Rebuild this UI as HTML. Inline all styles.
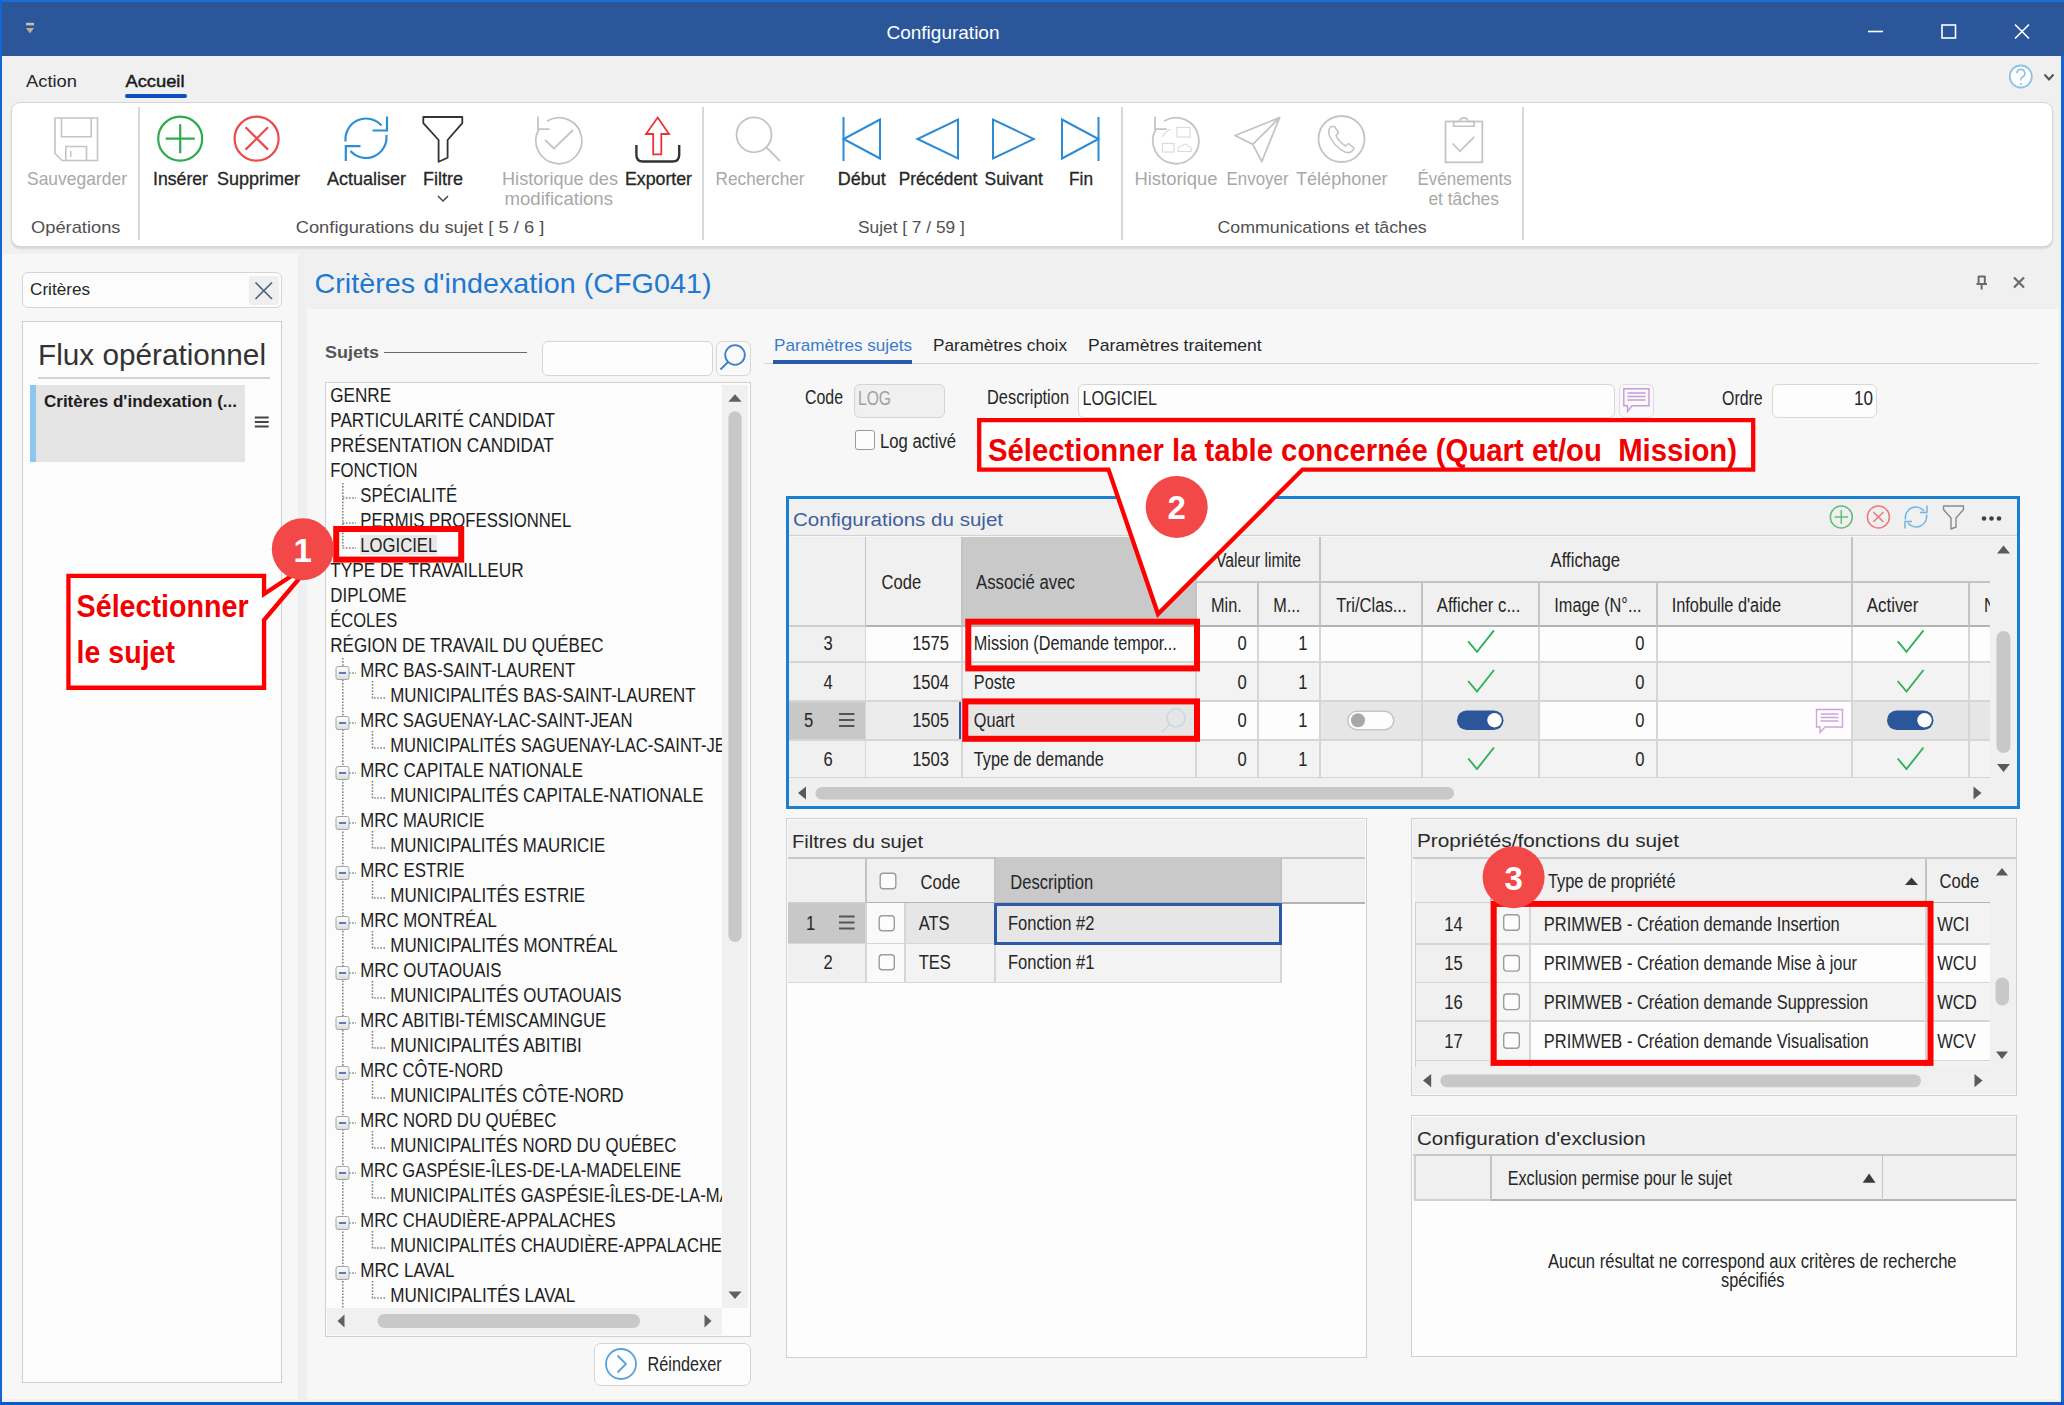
<!DOCTYPE html>
<html><head><meta charset="utf-8"><title>Configuration</title>
<style>
html,body{margin:0;padding:0;}
body{width:2064px;height:1405px;overflow:hidden;position:relative;background:#f0f0f0;font-family:"Liberation Sans",sans-serif;}
.a{position:absolute;box-sizing:border-box;}
.t{position:absolute;white-space:nowrap;transform-origin:0 0;}
svg.a{overflow:visible;}
svg.s{position:absolute;left:0;top:0;overflow:visible;font-family:"Liberation Sans",sans-serif;}
svg.s text{white-space:pre;}
</style></head><body>
<div class="a" style="left:0.00px;top:0.00px;width:2064px;height:1405px;background:#f0f0f0;"></div>
<div class="a" style="left:0.00px;top:0.00px;width:2064px;height:56px;background:#2b579a;"></div>
<div class="a" style="left:0.00px;top:0.00px;width:2064px;height:2px;background:#1a6ed6;"></div>
<svg class="a" style="left:20px;top:18px;" width="20" height="20" viewBox="20 18 20 20"><rect x="26" y="22.8" width="8" height="2.6" fill="#c9bda6"/><path d="M26,28 L34,28 L30,33.5 Z" fill="#bcae96"/></svg>
<svg class="s" width="1" height="1"><text x="886.50" y="38.86" font-size="17.99" fill="#ffffff" textLength="113.00" lengthAdjust="spacingAndGlyphs">Configuration</text></svg>
<svg class="a" style="left:1860px;top:20px;" width="180" height="25" viewBox="1860 20 180 25"><line x1="1868" y1="31.5" x2="1883" y2="31.5" stroke="#fff" stroke-width="1.6"/><rect x="1942" y="25" width="13.5" height="13" fill="none" stroke="#fff" stroke-width="1.6"/><path d="M2015,24.5 L2029,38.5 M2029,24.5 L2015,38.5" stroke="#fff" stroke-width="1.6"/></svg>
<svg class="s" width="1" height="1"><text x="26.00" y="86.66" font-size="17" fill="#262626" textLength="51.00" lengthAdjust="spacingAndGlyphs">Action</text></svg>
<svg class="s" width="1" height="1"><text x="125.50" y="86.66" font-size="17" fill="#1a1a1a" textLength="59.00" lengthAdjust="spacingAndGlyphs" stroke="#1a1a1a" stroke-width="0.45">Accueil</text></svg>
<div class="a" style="left:125.00px;top:94.00px;width:62px;height:3.5px;background:#0a4fc4;border-radius:2px;"></div>
<svg class="a" style="left:2005px;top:60px;" width="55" height="35" viewBox="2005 60 55 35"><circle cx="2020.8" cy="76.5" r="11" fill="#fff" stroke="#8cc4e8" stroke-width="1.8"/><path d="M2016.8,73.2 A4,4 0 1 1 2022.5,77 Q2020.8,78 2020.8,80.5" fill="none" stroke="#8cc4e8" stroke-width="1.6"/><circle cx="2020.8" cy="84" r="1.1" fill="#8cc4e8"/><path d="M2044.5,74.5 L2049,79.5 L2053.5,74.5" fill="none" stroke="#555" stroke-width="2.1"/></svg>
<div class="a" style="left:11.00px;top:102.00px;width:2042px;height:145px;background:#fff;border:1px solid #d4d4d4;border-radius:9px;box-shadow:0 2px 2px rgba(0,0,0,0.10);"></div>
<div class="a" style="left:138.00px;top:107.00px;width:1.5px;height:133px;background:#d8d8d8;"></div>
<div class="a" style="left:702.00px;top:107.00px;width:1.5px;height:133px;background:#d8d8d8;"></div>
<div class="a" style="left:1121.00px;top:107.00px;width:1.5px;height:133px;background:#d8d8d8;"></div>
<div class="a" style="left:1522.00px;top:107.00px;width:1.5px;height:133px;background:#d8d8d8;"></div>
<svg class="s" width="1" height="1"><text x="27.00" y="185.16" font-size="17.9" fill="#a8a8a8" textLength="100.00" lengthAdjust="spacingAndGlyphs">Sauvegarder</text></svg>
<svg class="s" width="1" height="1"><text x="153.00" y="185.16" font-size="17.9" fill="#262626" textLength="55.00" lengthAdjust="spacingAndGlyphs" stroke="#262626" stroke-width="0.3">Insérer</text></svg>
<svg class="s" width="1" height="1"><text x="217.00" y="185.16" font-size="17.9" fill="#262626" textLength="83.00" lengthAdjust="spacingAndGlyphs" stroke="#262626" stroke-width="0.3">Supprimer</text></svg>
<svg class="s" width="1" height="1"><text x="327.00" y="185.16" font-size="17.9" fill="#262626" textLength="79.00" lengthAdjust="spacingAndGlyphs" stroke="#262626" stroke-width="0.3">Actualiser</text></svg>
<svg class="s" width="1" height="1"><text x="423.00" y="185.16" font-size="17.9" fill="#262626" textLength="40.00" lengthAdjust="spacingAndGlyphs" stroke="#262626" stroke-width="0.3">Filtre</text></svg>
<svg class="s" width="1" height="1"><text x="502.00" y="185.16" font-size="17.9" fill="#a8a8a8" textLength="116.00" lengthAdjust="spacingAndGlyphs">Historique des</text></svg>
<svg class="s" width="1" height="1"><text x="504.50" y="204.66" font-size="17.9" fill="#a8a8a8" textLength="108.50" lengthAdjust="spacingAndGlyphs">modifications</text></svg>
<svg class="s" width="1" height="1"><text x="625.00" y="185.16" font-size="17.9" fill="#262626" textLength="67.00" lengthAdjust="spacingAndGlyphs" stroke="#262626" stroke-width="0.3">Exporter</text></svg>
<svg class="s" width="1" height="1"><text x="715.60" y="185.16" font-size="17.9" fill="#a8a8a8" textLength="89.00" lengthAdjust="spacingAndGlyphs">Rechercher</text></svg>
<svg class="s" width="1" height="1"><text x="837.70" y="185.16" font-size="17.9" fill="#262626" textLength="48.00" lengthAdjust="spacingAndGlyphs" stroke="#262626" stroke-width="0.3">Début</text></svg>
<svg class="s" width="1" height="1"><text x="898.70" y="185.16" font-size="17.9" fill="#262626" textLength="78.70" lengthAdjust="spacingAndGlyphs" stroke="#262626" stroke-width="0.3">Précédent</text></svg>
<svg class="s" width="1" height="1"><text x="984.50" y="185.16" font-size="17.9" fill="#262626" textLength="58.30" lengthAdjust="spacingAndGlyphs" stroke="#262626" stroke-width="0.3">Suivant</text></svg>
<svg class="s" width="1" height="1"><text x="1069.00" y="185.16" font-size="17.9" fill="#262626" textLength="24.00" lengthAdjust="spacingAndGlyphs" stroke="#262626" stroke-width="0.3">Fin</text></svg>
<svg class="s" width="1" height="1"><text x="1134.40" y="185.16" font-size="17.9" fill="#a8a8a8" textLength="83.00" lengthAdjust="spacingAndGlyphs">Historique</text></svg>
<svg class="s" width="1" height="1"><text x="1226.60" y="185.16" font-size="17.9" fill="#a8a8a8" textLength="62.00" lengthAdjust="spacingAndGlyphs">Envoyer</text></svg>
<svg class="s" width="1" height="1"><text x="1296.00" y="185.16" font-size="17.9" fill="#a8a8a8" textLength="91.50" lengthAdjust="spacingAndGlyphs">Téléphoner</text></svg>
<svg class="s" width="1" height="1"><text x="1417.60" y="185.16" font-size="17.9" fill="#a8a8a8" textLength="94.00" lengthAdjust="spacingAndGlyphs">Événements</text></svg>
<svg class="s" width="1" height="1"><text x="1428.40" y="204.66" font-size="17.9" fill="#a8a8a8" textLength="70.60" lengthAdjust="spacingAndGlyphs">et tâches</text></svg>
<svg class="s" width="1" height="1"><text x="31.00" y="233.16" font-size="17" fill="#505050" textLength="89.50" lengthAdjust="spacingAndGlyphs">Opérations</text></svg>
<svg class="s" width="1" height="1"><text x="295.70" y="233.16" font-size="17" fill="#505050" textLength="248.60" lengthAdjust="spacingAndGlyphs">Configurations du sujet [ 5 / 6 ]</text></svg>
<svg class="s" width="1" height="1"><text x="858.00" y="233.16" font-size="17" fill="#505050" textLength="106.80" lengthAdjust="spacingAndGlyphs">Sujet [ 7 / 59 ]</text></svg>
<svg class="s" width="1" height="1"><text x="1217.50" y="233.16" font-size="17" fill="#505050" textLength="209.20" lengthAdjust="spacingAndGlyphs">Communications et tâches</text></svg>
<svg class="a" style="left:0px;top:100px;" width="1600" height="110" viewBox="0 100 1600 110"><path d="M55,118 H97.5 V160.5 H62 L55,153.5 Z" fill="none" stroke="#c4c4c4" stroke-width="1.6"/><path d="M61.5,118 V136.8 H91.2 V118" fill="none" stroke="#c4c4c4" stroke-width="1.6"/><path d="M65.8,160.5 V146.5 H86.5 V160.5" fill="none" stroke="#c4c4c4" stroke-width="1.6"/><line x1="70.8" y1="151" x2="70.8" y2="157" stroke="#c4c4c4" stroke-width="1.4"/><circle cx="180.2" cy="138.7" r="22" fill="none" stroke="#2faa4f" stroke-width="2.2"/><path d="M165.7,138.7 H194.8 M180.2,124.2 V153.2" stroke="#2faa4f" stroke-width="2.2"/><circle cx="256.6" cy="138.7" r="22" fill="none" stroke="#e84c4c" stroke-width="2.2"/><path d="M245.6,127.2 L268,149.6 M268,127.2 L245.6,149.6" stroke="#e84c4c" stroke-width="2.2"/><path d="M345.6,141.5 A20.6,20.6 0 0 1 381.5,125.5" fill="none" stroke="#2b8fd8" stroke-width="2.2"/><path d="M387,116.5 V130.5 H372.5" fill="none" stroke="#2b8fd8" stroke-width="2.2"/><path d="M386.4,135 A20.6,20.6 0 0 1 350.5,151" fill="none" stroke="#2b8fd8" stroke-width="2.2"/><path d="M345.8,161 V146.2 H360.5" fill="none" stroke="#2b8fd8" stroke-width="2.2"/><path d="M423.3,117 H462.3 V123.2 L447.6,140 V157.8 L438.6,161.8 V140 L423.3,123.2 Z" fill="none" stroke="#333" stroke-width="1.8" stroke-linejoin="round"/><path d="M438,196 L443,201 L448,196" fill="none" stroke="#444" stroke-width="1.5"/><path d="M538.5,130 A23,23 0 1 0 547,121" fill="none" stroke="#c4c4c4" stroke-width="1.8"/><path d="M538,116.6 V129.2 H549.6" fill="none" stroke="#c4c4c4" stroke-width="1.8"/><path d="M545,140 L554,148.5 L573,130" fill="none" stroke="#c4c4c4" stroke-width="1.8"/><path d="M657.7,117.5 L669,134 H661.3 V154.3 H653.2 V134 H646 Z" fill="none" stroke="#e8343a" stroke-width="1.8" stroke-linejoin="miter"/><path d="M636.4,145 V155 Q636.4,161.5 643,161.5 H672.5 Q679.2,161.5 679.2,155 V145" fill="none" stroke="#333" stroke-width="2.4"/><circle cx="754" cy="134.8" r="17.5" fill="none" stroke="#c4c4c4" stroke-width="1.8"/><line x1="766.5" y1="147.5" x2="780" y2="161" stroke="#c4c4c4" stroke-width="1.8"/><path d="M843.5,117 V161 M880,119.5 V158.5 L843.5,139 Z" fill="none" stroke="#2a8ad4" stroke-width="2"/><path d="M958,119.5 V158.5 L917.5,139 Z" fill="none" stroke="#2a8ad4" stroke-width="2"/><path d="M993,119.5 V158.5 L1033.8,139 Z" fill="none" stroke="#2a8ad4" stroke-width="2"/><path d="M1098.5,117 V161 M1062,119.5 V158.5 L1098.5,139 Z" fill="none" stroke="#2a8ad4" stroke-width="2"/><path d="M1155.5,130 A23,23 0 1 0 1164,121" fill="none" stroke="#c4c4c4" stroke-width="1.8"/><path d="M1155,116.6 V129.2 H1166.8" fill="none" stroke="#c4c4c4" stroke-width="1.8"/><g fill="none" stroke="#dadada" stroke-width="1.2"><rect x="1177" y="127.5" width="13" height="9.5"/><rect x="1162.5" y="143.5" width="11.5" height="8.5"/><path d="M1178,151.5 Q1177,146 1182,146 Q1185,142 1188,146 Q1192,146 1191,151.5 Z"/><path d="M1162,137 Q1166,131 1171,129"/></g><path d="M1279.7,117.5 L1235,135.5 L1252.8,144.4 L1261.8,161.5 Z M1279.7,117.5 L1252.8,144.4" fill="none" stroke="#c4c4c4" stroke-width="1.8" stroke-linejoin="round"/><circle cx="1341.5" cy="139" r="23" fill="none" stroke="#c4c4c4" stroke-width="1.8"/><path d="M1331,126.5 Q1327,130 1330,137 Q1335,147 1345,152 Q1350,154 1353,150 L1354,148 L1348.5,143.5 L1345.5,146 Q1339,142 1336,135.5 L1338.5,132.5 L1334.5,126.5 Z" fill="none" stroke="#c4c4c4" stroke-width="1.6" stroke-linejoin="round"/><rect x="1445.5" y="121.5" width="36.8" height="40.8" fill="none" stroke="#c4c4c4" stroke-width="1.8"/><path d="M1453.6,121.5 V126.2 H1474.2 V121.5 H1468 A4.3,4.3 0 0 0 1459.5,121.5 Z" fill="none" stroke="#c4c4c4" stroke-width="1.6"/><path d="M1452.7,143.5 L1459.9,151.3 L1474.2,136.9" fill="none" stroke="#c4c4c4" stroke-width="1.8"/></svg>
<div class="a" style="left:0.00px;top:0.00px;width:2px;height:1405px;background:#1466d2;"></div>
<div class="a" style="left:2061.00px;top:56.00px;width:3px;height:1349px;background:#1466d2;"></div>
<div class="a" style="left:0.00px;top:1402.00px;width:2064px;height:3px;background:#0b57c4;"></div>
<div class="a" style="left:3.00px;top:254.00px;width:295px;height:1145px;background:#f7f7f7;"></div>
<div class="a" style="left:298.00px;top:254.00px;width:9px;height:1148px;background:#efefef;"></div>
<div class="a" style="left:22.00px;top:272.00px;width:260px;height:36px;background:#fcfcfc;border:1px solid #d6d6d6;border-radius:6px;"></div>
<div class="a" style="left:248.50px;top:276.00px;width:30px;height:29px;background:#efefef;border-radius:3px;"></div>
<svg class="a" style="left:250px;top:278px;" width="28" height="26" viewBox="250 278 28 26"><path d="M255.5,282.5 L272,299 M272,282.5 L255.5,299" stroke="#4e6182" stroke-width="1.7"/></svg>
<svg class="s" width="1" height="1"><text x="30.00" y="294.66" font-size="16" fill="#262626" textLength="60.00" lengthAdjust="spacingAndGlyphs">Critères</text></svg>
<div class="a" style="left:22.00px;top:321.00px;width:260px;height:1062px;background:#fcfcfc;border:1.5px solid #d0d0d0;"></div>
<svg class="s" width="1" height="1"><text x="38.00" y="365.16" font-size="29" fill="#333333" textLength="228.00" lengthAdjust="spacingAndGlyphs">Flux opérationnel</text></svg>
<div class="a" style="left:38.00px;top:377.00px;width:232px;height:1.5px;background:#d4d4d4;"></div>
<div class="a" style="left:30.00px;top:384.50px;width:215px;height:77.5px;background:#e4e4e4;"></div>
<div class="a" style="left:30.00px;top:384.50px;width:6px;height:77.5px;background:#8ec6ee;"></div>
<svg class="s" width="1" height="1"><text x="44.00" y="406.66" font-size="17" fill="#1e1e1e" font-weight="bold">Critères d&#x27;indexation (...</text></svg>
<svg class="a" style="left:250px;top:412px;" width="25" height="20" viewBox="250 412 25 20"><path d="M254.8,417.5 H268.7 M254.8,422 H268.7 M254.8,426.5 H268.7" stroke="#444" stroke-width="2"/></svg>
<div class="a" style="left:305.00px;top:254.00px;width:1756px;height:55px;background:#f0f0f0;"></div>
<div class="a" style="left:307.00px;top:309.00px;width:1752px;height:1090px;background:#f7f7f7;"></div>
<svg class="s" width="1" height="1"><text x="314.50" y="293.16" font-size="28" fill="#1f78d1" textLength="397.00" lengthAdjust="spacingAndGlyphs">Critères d&#x27;indexation (CFG041)</text></svg>
<svg class="a" style="left:1970px;top:270px;" width="60" height="25" viewBox="1970 270 60 25"><path d="M1978.4,276.5 H1985 M1978.6,276 V284 M1984.8,276 V284 M1976.5,284 H1987 M1981.6,284 V289.5" fill="none" stroke="#6a6a6a" stroke-width="2"/><path d="M2014,277.5 L2024,287.5 M2024,277.5 L2014,287.5" stroke="#6a6a6a" stroke-width="2.2"/></svg>
<svg class="s" width="1" height="1"><text x="325.00" y="358.16" font-size="17" fill="#555555" font-weight="bold" textLength="54.00" lengthAdjust="spacingAndGlyphs">Sujets</text></svg>
<div class="a" style="left:384.00px;top:351.50px;width:143px;height:1.6px;background:#6a6a6a;"></div>
<div class="a" style="left:542.00px;top:341.00px;width:171px;height:35px;background:#fdfdfd;border:1.5px solid #d6d6d6;border-radius:6px;"></div>
<div class="a" style="left:716.00px;top:341.00px;width:35px;height:35px;background:#f9f9f9;border:1.5px solid #d6d6d6;border-radius:6px;"></div>
<svg class="a" style="left:715px;top:340px;" width="36" height="36" viewBox="715 340 36 36"><circle cx="735" cy="355" r="9.8" fill="none" stroke="#3b7fc4" stroke-width="1.8"/><line x1="728" y1="362" x2="720.5" y2="369.5" stroke="#3b7fc4" stroke-width="1.8"/></svg>
<div class="a" style="left:325.00px;top:382.00px;width:426px;height:955px;background:#fcfcfc;border:1.5px solid #d0d0d0;"></div>
<div class="a" style="left:721.50px;top:385.00px;width:26.5px;height:923px;background:#f0f0f0;"></div>
<svg class="a" style="left:720px;top:385px;" width="30" height="925" viewBox="720 385 30 925"><path d="M728.4,401.7 L735,394.2 L741.6,401.7 Z" fill="#606060"/><rect x="728.4" y="411.3" width="13.2" height="530.7" rx="6.6" fill="#c8c8c8"/><path d="M728.4,1291.5 L735,1299 L741.6,1291.5 Z" fill="#606060"/></svg>
<div class="a" style="left:326.50px;top:1308.00px;width:395px;height:27px;background:#f0f0f0;"></div>
<svg class="a" style="left:326px;top:1308px;" width="425" height="28" viewBox="326 1308 425 28"><path d="M344.5,1314.5 L337.5,1321 L344.5,1327.5 Z" fill="#606060"/><rect x="377.5" y="1314" width="262.5" height="14" rx="7" fill="#c8c8c8"/><path d="M704.5,1314.5 L711.5,1321 L704.5,1327.5 Z" fill="#606060"/></svg>
<div class="a" style="left:326.5px;top:384px;width:395px;height:924px;overflow:hidden;">
<div class="a" style="left:33.00px;top:151.00px;width:77px;height:19.5px;background:#e8e8e8;"></div>
<svg class="a" style="left:-0.5px;top:0px;" width="50" height="924" viewBox="326 384 50 924"><defs><linearGradient id="eg" x1="0" y1="0" x2="0" y2="1"><stop offset="0" stop-color="#fff"/><stop offset="1" stop-color="#dcdcdc"/></linearGradient></defs><path d="M342.8,483.0 V548.0 M342.8,498.0 H356 M342.8,523.0 H356 M342.8,548.0 H356" fill="none" stroke="#858585" stroke-width="1.6" stroke-dasharray="1.6,1.5"/><path d="M342.8,658.0 V1310" fill="none" stroke="#858585" stroke-width="1.6" stroke-dasharray="1.6,1.5"/><path d="M349,673.0 H356" fill="none" stroke="#858585" stroke-width="1.6" stroke-dasharray="1.6,1.5"/><path d="M372.5,681.0 V698.0 H385" fill="none" stroke="#858585" stroke-width="1.6" stroke-dasharray="1.6,1.5"/><path d="M349,723.0 H356" fill="none" stroke="#858585" stroke-width="1.6" stroke-dasharray="1.6,1.5"/><path d="M372.5,731.0 V748.0 H385" fill="none" stroke="#858585" stroke-width="1.6" stroke-dasharray="1.6,1.5"/><path d="M349,773.0 H356" fill="none" stroke="#858585" stroke-width="1.6" stroke-dasharray="1.6,1.5"/><path d="M372.5,781.0 V798.0 H385" fill="none" stroke="#858585" stroke-width="1.6" stroke-dasharray="1.6,1.5"/><path d="M349,823.0 H356" fill="none" stroke="#858585" stroke-width="1.6" stroke-dasharray="1.6,1.5"/><path d="M372.5,831.0 V848.0 H385" fill="none" stroke="#858585" stroke-width="1.6" stroke-dasharray="1.6,1.5"/><path d="M349,873.0 H356" fill="none" stroke="#858585" stroke-width="1.6" stroke-dasharray="1.6,1.5"/><path d="M372.5,881.0 V898.0 H385" fill="none" stroke="#858585" stroke-width="1.6" stroke-dasharray="1.6,1.5"/><path d="M349,923.0 H356" fill="none" stroke="#858585" stroke-width="1.6" stroke-dasharray="1.6,1.5"/><path d="M372.5,931.0 V948.0 H385" fill="none" stroke="#858585" stroke-width="1.6" stroke-dasharray="1.6,1.5"/><path d="M349,973.0 H356" fill="none" stroke="#858585" stroke-width="1.6" stroke-dasharray="1.6,1.5"/><path d="M372.5,981.0 V998.0 H385" fill="none" stroke="#858585" stroke-width="1.6" stroke-dasharray="1.6,1.5"/><path d="M349,1022.9999999999999 H356" fill="none" stroke="#858585" stroke-width="1.6" stroke-dasharray="1.6,1.5"/><path d="M372.5,1031.0 V1048.0 H385" fill="none" stroke="#858585" stroke-width="1.6" stroke-dasharray="1.6,1.5"/><path d="M349,1073.0 H356" fill="none" stroke="#858585" stroke-width="1.6" stroke-dasharray="1.6,1.5"/><path d="M372.5,1081.0 V1098.0 H385" fill="none" stroke="#858585" stroke-width="1.6" stroke-dasharray="1.6,1.5"/><path d="M349,1123.0 H356" fill="none" stroke="#858585" stroke-width="1.6" stroke-dasharray="1.6,1.5"/><path d="M372.5,1131.0 V1148.0 H385" fill="none" stroke="#858585" stroke-width="1.6" stroke-dasharray="1.6,1.5"/><path d="M349,1173.0 H356" fill="none" stroke="#858585" stroke-width="1.6" stroke-dasharray="1.6,1.5"/><path d="M372.5,1181.0 V1198.0 H385" fill="none" stroke="#858585" stroke-width="1.6" stroke-dasharray="1.6,1.5"/><path d="M349,1223.0 H356" fill="none" stroke="#858585" stroke-width="1.6" stroke-dasharray="1.6,1.5"/><path d="M372.5,1231.0 V1248.0 H385" fill="none" stroke="#858585" stroke-width="1.6" stroke-dasharray="1.6,1.5"/><path d="M349,1273.0 H356" fill="none" stroke="#858585" stroke-width="1.6" stroke-dasharray="1.6,1.5"/><path d="M372.5,1281.0 V1298.0 H385" fill="none" stroke="#858585" stroke-width="1.6" stroke-dasharray="1.6,1.5"/><rect x="336" y="666.5" width="13" height="13" rx="2" fill="url(#eg)" stroke="#a4a4a4" stroke-width="1"/><line x1="339" y1="673.0" x2="346" y2="673.0" stroke="#3b5cae" stroke-width="1.6"/><rect x="336" y="716.5" width="13" height="13" rx="2" fill="url(#eg)" stroke="#a4a4a4" stroke-width="1"/><line x1="339" y1="723.0" x2="346" y2="723.0" stroke="#3b5cae" stroke-width="1.6"/><rect x="336" y="766.5" width="13" height="13" rx="2" fill="url(#eg)" stroke="#a4a4a4" stroke-width="1"/><line x1="339" y1="773.0" x2="346" y2="773.0" stroke="#3b5cae" stroke-width="1.6"/><rect x="336" y="816.5" width="13" height="13" rx="2" fill="url(#eg)" stroke="#a4a4a4" stroke-width="1"/><line x1="339" y1="823.0" x2="346" y2="823.0" stroke="#3b5cae" stroke-width="1.6"/><rect x="336" y="866.5" width="13" height="13" rx="2" fill="url(#eg)" stroke="#a4a4a4" stroke-width="1"/><line x1="339" y1="873.0" x2="346" y2="873.0" stroke="#3b5cae" stroke-width="1.6"/><rect x="336" y="916.5" width="13" height="13" rx="2" fill="url(#eg)" stroke="#a4a4a4" stroke-width="1"/><line x1="339" y1="923.0" x2="346" y2="923.0" stroke="#3b5cae" stroke-width="1.6"/><rect x="336" y="966.5" width="13" height="13" rx="2" fill="url(#eg)" stroke="#a4a4a4" stroke-width="1"/><line x1="339" y1="973.0" x2="346" y2="973.0" stroke="#3b5cae" stroke-width="1.6"/><rect x="336" y="1016.4999999999999" width="13" height="13" rx="2" fill="url(#eg)" stroke="#a4a4a4" stroke-width="1"/><line x1="339" y1="1022.9999999999999" x2="346" y2="1022.9999999999999" stroke="#3b5cae" stroke-width="1.6"/><rect x="336" y="1066.5" width="13" height="13" rx="2" fill="url(#eg)" stroke="#a4a4a4" stroke-width="1"/><line x1="339" y1="1073.0" x2="346" y2="1073.0" stroke="#3b5cae" stroke-width="1.6"/><rect x="336" y="1116.5" width="13" height="13" rx="2" fill="url(#eg)" stroke="#a4a4a4" stroke-width="1"/><line x1="339" y1="1123.0" x2="346" y2="1123.0" stroke="#3b5cae" stroke-width="1.6"/><rect x="336" y="1166.5" width="13" height="13" rx="2" fill="url(#eg)" stroke="#a4a4a4" stroke-width="1"/><line x1="339" y1="1173.0" x2="346" y2="1173.0" stroke="#3b5cae" stroke-width="1.6"/><rect x="336" y="1216.5" width="13" height="13" rx="2" fill="url(#eg)" stroke="#a4a4a4" stroke-width="1"/><line x1="339" y1="1223.0" x2="346" y2="1223.0" stroke="#3b5cae" stroke-width="1.6"/><rect x="336" y="1266.5" width="13" height="13" rx="2" fill="url(#eg)" stroke="#a4a4a4" stroke-width="1"/><line x1="339" y1="1273.0" x2="346" y2="1273.0" stroke="#3b5cae" stroke-width="1.6"/></svg>
<svg class="s" width="1" height="1"><text x="3.30" y="18.26" font-size="20" fill="#1e1e1e" textLength="60.80" lengthAdjust="spacingAndGlyphs">GENRE</text></svg>
<svg class="s" width="1" height="1"><text x="3.30" y="43.26" font-size="20" fill="#1e1e1e" textLength="224.60" lengthAdjust="spacingAndGlyphs">PARTICULARITÉ CANDIDAT</text></svg>
<svg class="s" width="1" height="1"><text x="3.30" y="68.26" font-size="20" fill="#1e1e1e" textLength="223.50" lengthAdjust="spacingAndGlyphs">PRÉSENTATION CANDIDAT</text></svg>
<svg class="s" width="1" height="1"><text x="3.30" y="93.26" font-size="20" fill="#1e1e1e" textLength="87.30" lengthAdjust="spacingAndGlyphs">FONCTION</text></svg>
<svg class="s" width="1" height="1"><text x="33.30" y="118.26" font-size="20" fill="#1e1e1e" textLength="96.90" lengthAdjust="spacingAndGlyphs">SPÉCIALITÉ</text></svg>
<svg class="s" width="1" height="1"><text x="33.30" y="143.26" font-size="20" fill="#1e1e1e" textLength="211.00" lengthAdjust="spacingAndGlyphs">PERMIS PROFESSIONNEL</text></svg>
<svg class="s" width="1" height="1"><text x="33.30" y="168.26" font-size="20" fill="#1e1e1e" textLength="77.00" lengthAdjust="spacingAndGlyphs">LOGICIEL</text></svg>
<svg class="s" width="1" height="1"><text x="3.30" y="193.26" font-size="20" fill="#1e1e1e" textLength="193.30" lengthAdjust="spacingAndGlyphs">TYPE DE TRAVAILLEUR</text></svg>
<svg class="s" width="1" height="1"><text x="3.30" y="218.26" font-size="20" fill="#1e1e1e" textLength="76.20" lengthAdjust="spacingAndGlyphs">DIPLOME</text></svg>
<svg class="s" width="1" height="1"><text x="3.30" y="243.26" font-size="20" fill="#1e1e1e" textLength="67.00" lengthAdjust="spacingAndGlyphs">ÉCOLES</text></svg>
<svg class="s" width="1" height="1"><text x="3.30" y="268.26" font-size="20" fill="#1e1e1e" textLength="273.20" lengthAdjust="spacingAndGlyphs">RÉGION DE TRAVAIL DU QUÉBEC</text></svg>
<svg class="s" width="1" height="1"><text x="33.30" y="293.26" font-size="20" fill="#1e1e1e" textLength="215.00" lengthAdjust="spacingAndGlyphs">MRC BAS-SAINT-LAURENT</text></svg>
<svg class="s" width="1" height="1"><text x="63.30" y="318.26" font-size="20" fill="#1e1e1e" textLength="305.30" lengthAdjust="spacingAndGlyphs">MUNICIPALITÉS BAS-SAINT-LAURENT</text></svg>
<svg class="s" width="1" height="1"><text x="33.30" y="343.26" font-size="20" fill="#1e1e1e" textLength="272.20" lengthAdjust="spacingAndGlyphs">MRC SAGUENAY-LAC-SAINT-JEAN</text></svg>
<svg class="s" width="1" height="1"><text x="63.30" y="368.26" font-size="20" fill="#1e1e1e" textLength="358.60" lengthAdjust="spacingAndGlyphs">MUNICIPALITÉS SAGUENAY-LAC-SAINT-JEAN</text></svg>
<svg class="s" width="1" height="1"><text x="33.30" y="393.26" font-size="20" fill="#1e1e1e" textLength="222.80" lengthAdjust="spacingAndGlyphs">MRC CAPITALE NATIONALE</text></svg>
<svg class="s" width="1" height="1"><text x="63.30" y="418.26" font-size="20" fill="#1e1e1e" textLength="313.10" lengthAdjust="spacingAndGlyphs">MUNICIPALITÉS CAPITALE-NATIONALE</text></svg>
<svg class="s" width="1" height="1"><text x="33.30" y="443.26" font-size="20" fill="#1e1e1e" textLength="124.10" lengthAdjust="spacingAndGlyphs">MRC MAURICIE</text></svg>
<svg class="s" width="1" height="1"><text x="63.30" y="468.26" font-size="20" fill="#1e1e1e" textLength="214.90" lengthAdjust="spacingAndGlyphs">MUNICIPALITÉS MAURICIE</text></svg>
<svg class="s" width="1" height="1"><text x="33.30" y="493.26" font-size="20" fill="#1e1e1e" textLength="104.20" lengthAdjust="spacingAndGlyphs">MRC ESTRIE</text></svg>
<svg class="s" width="1" height="1"><text x="63.30" y="518.26" font-size="20" fill="#1e1e1e" textLength="194.90" lengthAdjust="spacingAndGlyphs">MUNICIPALITÉS ESTRIE</text></svg>
<svg class="s" width="1" height="1"><text x="33.30" y="543.26" font-size="20" fill="#1e1e1e" textLength="136.60" lengthAdjust="spacingAndGlyphs">MRC MONTRÉAL</text></svg>
<svg class="s" width="1" height="1"><text x="63.30" y="568.26" font-size="20" fill="#1e1e1e" textLength="227.30" lengthAdjust="spacingAndGlyphs">MUNICIPALITÉS MONTRÉAL</text></svg>
<svg class="s" width="1" height="1"><text x="33.30" y="593.26" font-size="20" fill="#1e1e1e" textLength="141.10" lengthAdjust="spacingAndGlyphs">MRC OUTAOUAIS</text></svg>
<svg class="s" width="1" height="1"><text x="63.30" y="618.26" font-size="20" fill="#1e1e1e" textLength="231.30" lengthAdjust="spacingAndGlyphs">MUNICIPALITÉS OUTAOUAIS</text></svg>
<svg class="s" width="1" height="1"><text x="33.30" y="643.26" font-size="20" fill="#1e1e1e" textLength="245.80" lengthAdjust="spacingAndGlyphs">MRC ABITIBI-TÉMISCAMINGUE</text></svg>
<svg class="s" width="1" height="1"><text x="63.30" y="668.26" font-size="20" fill="#1e1e1e" textLength="191.40" lengthAdjust="spacingAndGlyphs">MUNICIPALITÉS ABITIBI</text></svg>
<svg class="s" width="1" height="1"><text x="33.30" y="693.26" font-size="20" fill="#1e1e1e" textLength="142.60" lengthAdjust="spacingAndGlyphs">MRC CÔTE-NORD</text></svg>
<svg class="s" width="1" height="1"><text x="63.30" y="718.26" font-size="20" fill="#1e1e1e" textLength="233.30" lengthAdjust="spacingAndGlyphs">MUNICIPALITÉS CÔTE-NORD</text></svg>
<svg class="s" width="1" height="1"><text x="33.30" y="743.26" font-size="20" fill="#1e1e1e" textLength="195.90" lengthAdjust="spacingAndGlyphs">MRC NORD DU QUÉBEC</text></svg>
<svg class="s" width="1" height="1"><text x="63.30" y="768.26" font-size="20" fill="#1e1e1e" textLength="286.10" lengthAdjust="spacingAndGlyphs">MUNICIPALITÉS NORD DU QUÉBEC</text></svg>
<svg class="s" width="1" height="1"><text x="33.30" y="793.26" font-size="20" fill="#1e1e1e" textLength="321.00" lengthAdjust="spacingAndGlyphs">MRC GASPÉSIE-ÎLES-DE-LA-MADELEINE</text></svg>
<svg class="s" width="1" height="1"><text x="63.30" y="818.26" font-size="20" fill="#1e1e1e" textLength="411.09" lengthAdjust="spacingAndGlyphs">MUNICIPALITÉS GASPÉSIE-ÎLES-DE-LA-MADELEINE</text></svg>
<svg class="s" width="1" height="1"><text x="33.30" y="843.26" font-size="20" fill="#1e1e1e" textLength="255.20" lengthAdjust="spacingAndGlyphs">MRC CHAUDIÈRE-APPALACHES</text></svg>
<svg class="s" width="1" height="1"><text x="63.30" y="868.26" font-size="20" fill="#1e1e1e" textLength="342.64" lengthAdjust="spacingAndGlyphs">MUNICIPALITÉS CHAUDIÈRE-APPALACHES</text></svg>
<svg class="s" width="1" height="1"><text x="33.30" y="893.26" font-size="20" fill="#1e1e1e" textLength="94.20" lengthAdjust="spacingAndGlyphs">MRC LAVAL</text></svg>
<svg class="s" width="1" height="1"><text x="63.30" y="918.26" font-size="20" fill="#1e1e1e" textLength="184.90" lengthAdjust="spacingAndGlyphs">MUNICIPALITÉS LAVAL</text></svg>
</div>
<svg class="s" width="1" height="1"><text x="774.00" y="351.16" font-size="17" fill="#3a7ccc" textLength="138.00" lengthAdjust="spacingAndGlyphs">Paramètres sujets</text></svg>
<svg class="s" width="1" height="1"><text x="933.00" y="351.16" font-size="17" fill="#262626" textLength="134.00" lengthAdjust="spacingAndGlyphs">Paramètres choix</text></svg>
<svg class="s" width="1" height="1"><text x="1088.00" y="351.16" font-size="17" fill="#262626" textLength="173.70" lengthAdjust="spacingAndGlyphs">Paramètres traitement</text></svg>
<div class="a" style="left:764.00px;top:362.80px;width:1275px;height:1.6px;background:#d4d4d4;"></div>
<div class="a" style="left:773.00px;top:359.50px;width:139px;height:4.5px;background:#2b5aa8;"></div>
<svg class="s" width="1" height="1"><text x="805.00" y="404.16" font-size="20" fill="#262626" textLength="38.00" lengthAdjust="spacingAndGlyphs">Code</text></svg>
<div class="a" style="left:854.00px;top:384.00px;width:91px;height:34px;background:#f0f0f0;border:1.5px solid #d4d4d4;border-radius:6px;"></div>
<svg class="s" width="1" height="1"><text x="858.00" y="404.66" font-size="20" fill="#a0a0a0" textLength="33.00" lengthAdjust="spacingAndGlyphs">LOG</text></svg>
<div class="a" style="left:855.00px;top:430.00px;width:19.5px;height:20px;background:#fdfdfd;border:1.4px solid #9a9a9a;border-radius:3px;"></div>
<svg class="s" width="1" height="1"><text x="880.00" y="448.16" font-size="20" fill="#262626" textLength="76.00" lengthAdjust="spacingAndGlyphs">Log activé</text></svg>
<svg class="s" width="1" height="1"><text x="987.00" y="404.16" font-size="20" fill="#262626" textLength="82.00" lengthAdjust="spacingAndGlyphs">Description</text></svg>
<div class="a" style="left:1078.00px;top:384.00px;width:537px;height:34px;background:#fdfdfd;border:1.5px solid #d8d8d8;border-radius:6px;"></div>
<svg class="s" width="1" height="1"><text x="1082.50" y="405.16" font-size="20" fill="#262626" textLength="74.50" lengthAdjust="spacingAndGlyphs">LOGICIEL</text></svg>
<div class="a" style="left:1618.50px;top:384.00px;width:35px;height:34px;background:#f9f9f9;border:1.5px solid #dddddd;border-radius:6px;"></div>
<svg class="a" style="left:1620px;top:385px;" width="33" height="32" viewBox="1620 385 33 32"><path d="M1623.8,388.8 H1649 V405.8 H1632 L1627.5,411.5 V405.8 H1623.8 Z" fill="none" stroke="#c79ad8" stroke-width="1.4"/><path d="M1627.5,393 H1645.5 M1627.5,396.5 H1645.5 M1627.5,400 H1645.5" stroke="#c79ad8" stroke-width="1.3"/></svg>
<svg class="s" width="1" height="1"><text x="1722.00" y="404.66" font-size="20" fill="#262626" textLength="40.70" lengthAdjust="spacingAndGlyphs">Ordre</text></svg>
<div class="a" style="left:1772.00px;top:384.00px;width:105px;height:34px;background:#fdfdfd;border:1.5px solid #d8d8d8;border-radius:6px;"></div>
<svg class="s" width="1" height="1"><text x="1854.00" y="405.16" font-size="20" fill="#262626" textLength="19.00" lengthAdjust="spacingAndGlyphs">10</text></svg>
<div class="a" style="left:786.00px;top:496.00px;width:1233.5px;height:313px;background:#f7f7f7;border:3px solid #1b7fd1;"></div>
<div class="a" style="left:789.00px;top:499.00px;width:1227.5px;height:36px;background:#f0f0f0;"></div>
<div class="a" style="left:789.00px;top:534.50px;width:1227.5px;height:1.5px;background:#d2d2d2;"></div>
<svg class="s" width="1" height="1"><text x="793.00" y="525.66" font-size="19" fill="#3d5f9e" textLength="210.00" lengthAdjust="spacingAndGlyphs">Configurations du sujet</text></svg>
<svg class="a" style="left:1825px;top:500px;" width="185" height="35" viewBox="1825 500 185 35"><circle cx="1841.3" cy="517" r="11" fill="none" stroke="#5cbf7a" stroke-width="1.5"/><path d="M1834.5,517 H1848 M1841.3,510.2 V523.8" stroke="#5cbf7a" stroke-width="1.5"/><circle cx="1878.4" cy="517" r="11" fill="none" stroke="#f07878" stroke-width="1.5"/><path d="M1873.4,512 L1883.4,522 M1883.4,512 L1873.4,522" stroke="#f07878" stroke-width="1.5"/><path d="M1905.5,519.5 A10.5,10.5 0 0 1 1924,511 M1927,505.5 V512.5 H1920 M1926.5,514.5 A10.5,10.5 0 0 1 1908,523 M1905,528.5 V521.5 H1912" fill="none" stroke="#70b4e6" stroke-width="1.5"/><path d="M1943.5,506 H1963.5 V509.5 L1956,518 V527 L1951,529 V518 L1943.5,509.5 Z" fill="none" stroke="#8a8a8a" stroke-width="1.4" stroke-linejoin="round"/><circle cx="1984" cy="518.5" r="2.3" fill="#404040"/><circle cx="1991.5" cy="518.5" r="2.3" fill="#404040"/><circle cx="1999" cy="518.5" r="2.3" fill="#404040"/></svg>
<div class="a" style="left:789px;top:536.5px;width:1201px;height:241.5px;overflow:hidden;">
<div class="a" style="left:0.00px;top:0.00px;width:1201px;height:89.5px;background:#f0f0f0;"></div>
<div class="a" style="left:173.00px;top:0.00px;width:234px;height:89.5px;background:#c9c9c9;"></div>
<div class="a" style="left:76.50px;top:89.50px;width:1201px;height:36px;background:#fdfdfd;"></div>
<div class="a" style="left:0.00px;top:89.50px;width:76.5px;height:36px;background:#f0f0f0;"></div>
<div class="a" style="left:76.50px;top:125.50px;width:1201px;height:39px;background:#f3f3f3;"></div>
<div class="a" style="left:0.00px;top:125.50px;width:76.5px;height:39px;background:#f0f0f0;"></div>
<div class="a" style="left:76.50px;top:164.50px;width:1201px;height:39px;background:#fdfdfd;"></div>
<div class="a" style="left:0.00px;top:164.50px;width:76.5px;height:39px;background:#f0f0f0;"></div>
<div class="a" style="left:76.50px;top:203.50px;width:1201px;height:38px;background:#f3f3f3;"></div>
<div class="a" style="left:0.00px;top:203.50px;width:76.5px;height:38px;background:#f0f0f0;"></div>
<div class="a" style="left:0.00px;top:164.50px;width:76.5px;height:39px;background:#c8c8c8;"></div>
<div class="a" style="left:76.50px;top:164.50px;width:96.5px;height:39px;background:#ececec;"></div>
<div class="a" style="left:173.00px;top:164.50px;width:234px;height:39px;background:#e6e6e6;"></div>
<div class="a" style="left:170.00px;top:164.50px;width:3px;height:39px;background:#2b5aa8;"></div>
<div class="a" style="left:531.00px;top:164.50px;width:102px;height:39px;background:#e6e6e6;"></div>
<div class="a" style="left:633.00px;top:164.50px;width:117px;height:39px;background:#e6e6e6;"></div>
<div class="a" style="left:1063.00px;top:164.50px;width:117px;height:39px;background:#e6e6e6;"></div>
<div class="a" style="left:1180.00px;top:164.50px;width:131px;height:39px;background:#e6e6e6;"></div>
<div class="a" style="left:0.00px;top:124.50px;width:1201px;height:1.6px;background:#d6d6d6;"></div>
<div class="a" style="left:0.00px;top:163.50px;width:1201px;height:1.6px;background:#d6d6d6;"></div>
<div class="a" style="left:0.00px;top:202.50px;width:1201px;height:1.6px;background:#d6d6d6;"></div>
<div class="a" style="left:0.00px;top:240.50px;width:1201px;height:1.6px;background:#d6d6d6;"></div>
<div class="a" style="left:75.70px;top:89.50px;width:1.6px;height:152px;background:#d6d6d6;"></div>
<div class="a" style="left:172.20px;top:89.50px;width:1.6px;height:152px;background:#d6d6d6;"></div>
<div class="a" style="left:406.20px;top:89.50px;width:1.6px;height:152px;background:#d6d6d6;"></div>
<div class="a" style="left:468.20px;top:89.50px;width:1.6px;height:152px;background:#d6d6d6;"></div>
<div class="a" style="left:530.20px;top:89.50px;width:1.6px;height:152px;background:#d6d6d6;"></div>
<div class="a" style="left:632.20px;top:89.50px;width:1.6px;height:152px;background:#d6d6d6;"></div>
<div class="a" style="left:749.20px;top:89.50px;width:1.6px;height:152px;background:#d6d6d6;"></div>
<div class="a" style="left:867.20px;top:89.50px;width:1.6px;height:152px;background:#d6d6d6;"></div>
<div class="a" style="left:1062.20px;top:89.50px;width:1.6px;height:152px;background:#d6d6d6;"></div>
<div class="a" style="left:1179.20px;top:89.50px;width:1.6px;height:152px;background:#d6d6d6;"></div>
<div class="a" style="left:0.00px;top:-1.00px;width:1201px;height:1.5px;background:#c8c8c8;"></div>
<div class="a" style="left:76.50px;top:88.00px;width:1201px;height:2px;background:#b4b4b4;"></div>
<div class="a" style="left:0.00px;top:88.00px;width:76.5px;height:2px;background:#d0d0d0;"></div>
<div class="a" style="left:407.00px;top:44.50px;width:794px;height:1.8px;background:#c4c4c4;"></div>
<div class="a" style="left:75.60px;top:-0.50px;width:1.8px;height:90px;background:#c4c4c4;"></div>
<div class="a" style="left:172.10px;top:-0.50px;width:1.8px;height:90px;background:#c4c4c4;"></div>
<div class="a" style="left:406.10px;top:-0.50px;width:1.8px;height:90px;background:#c4c4c4;"></div>
<div class="a" style="left:468.10px;top:45.50px;width:1.8px;height:44px;background:#c4c4c4;"></div>
<div class="a" style="left:632.10px;top:45.50px;width:1.8px;height:44px;background:#c4c4c4;"></div>
<div class="a" style="left:749.10px;top:45.50px;width:1.8px;height:44px;background:#c4c4c4;"></div>
<div class="a" style="left:867.10px;top:45.50px;width:1.8px;height:44px;background:#c4c4c4;"></div>
<div class="a" style="left:1179.10px;top:45.50px;width:1.8px;height:44px;background:#c4c4c4;"></div>
<div class="a" style="left:530.10px;top:-0.50px;width:1.8px;height:90px;background:#c4c4c4;"></div>
<div class="a" style="left:1062.10px;top:-0.50px;width:1.8px;height:90px;background:#c4c4c4;"></div>
<svg class="s" width="1" height="1"><text x="92.50" y="52.16" font-size="20" fill="#262626" textLength="39.59" lengthAdjust="spacingAndGlyphs">Code</text></svg>
<svg class="s" width="1" height="1"><text x="187.00" y="52.16" font-size="20" fill="#262626" textLength="99.00" lengthAdjust="spacingAndGlyphs">Associé avec</text></svg>
<svg class="s" width="1" height="1"><text x="427.00" y="30.16" font-size="20" fill="#262626" textLength="85.00" lengthAdjust="spacingAndGlyphs">Valeur limite</text></svg>
<svg class="s" width="1" height="1"><text x="761.60" y="30.16" font-size="20" fill="#262626" textLength="69.40" lengthAdjust="spacingAndGlyphs">Affichage</text></svg>
<svg class="s" width="1" height="1"><text x="422.00" y="75.16" font-size="20" fill="#262626" textLength="30.80" lengthAdjust="spacingAndGlyphs">Min.</text></svg>
<svg class="s" width="1" height="1"><text x="484.30" y="75.16" font-size="20" fill="#262626" textLength="27.10" lengthAdjust="spacingAndGlyphs">M...</text></svg>
<svg class="s" width="1" height="1"><text x="547.30" y="75.16" font-size="20" fill="#262626" textLength="70.20" lengthAdjust="spacingAndGlyphs">Tri/Clas...</text></svg>
<svg class="s" width="1" height="1"><text x="647.80" y="75.16" font-size="20" fill="#262626" textLength="83.60" lengthAdjust="spacingAndGlyphs">Afficher c...</text></svg>
<svg class="s" width="1" height="1"><text x="765.30" y="75.16" font-size="20" fill="#262626" textLength="87.20" lengthAdjust="spacingAndGlyphs">Image (N°...</text></svg>
<svg class="s" width="1" height="1"><text x="882.70" y="75.16" font-size="20" fill="#262626" textLength="109.30" lengthAdjust="spacingAndGlyphs">Infobulle d&#x27;aide</text></svg>
<svg class="s" width="1" height="1"><text x="1077.70" y="75.16" font-size="20" fill="#262626" textLength="51.70" lengthAdjust="spacingAndGlyphs">Activer</text></svg>
<svg class="s" width="1" height="1"><text x="1195.00" y="75.16" font-size="20" fill="#262626" textLength="11.95" lengthAdjust="spacingAndGlyphs">N</text></svg>
<svg class="s" width="1" height="1"><text x="34.39" y="112.76" font-size="20" fill="#262626" textLength="9.21" lengthAdjust="spacingAndGlyphs">3</text></svg>
<svg class="s" width="1" height="1"><text x="123.15" y="112.76" font-size="20" fill="#262626" textLength="36.85" lengthAdjust="spacingAndGlyphs">1575</text></svg>
<svg class="s" width="1" height="1"><text x="184.80" y="112.76" font-size="20" fill="#262626" textLength="203.04" lengthAdjust="spacingAndGlyphs">Mission (Demande tempor...</text></svg>
<svg class="s" width="1" height="1"><text x="448.39" y="112.76" font-size="20" fill="#262626" textLength="9.21" lengthAdjust="spacingAndGlyphs">0</text></svg>
<svg class="s" width="1" height="1"><text x="509.29" y="112.76" font-size="20" fill="#262626" textLength="9.21" lengthAdjust="spacingAndGlyphs">1</text></svg>
<svg class="s" width="1" height="1"><text x="846.29" y="112.76" font-size="20" fill="#262626" textLength="9.21" lengthAdjust="spacingAndGlyphs">0</text></svg>
<svg class="s" width="1" height="1"><text x="34.39" y="151.56" font-size="20" fill="#262626" textLength="9.21" lengthAdjust="spacingAndGlyphs">4</text></svg>
<svg class="s" width="1" height="1"><text x="123.15" y="151.56" font-size="20" fill="#262626" textLength="36.85" lengthAdjust="spacingAndGlyphs">1504</text></svg>
<svg class="s" width="1" height="1"><text x="184.80" y="151.56" font-size="20" fill="#262626" textLength="41.53" lengthAdjust="spacingAndGlyphs">Poste</text></svg>
<svg class="s" width="1" height="1"><text x="448.39" y="151.56" font-size="20" fill="#262626" textLength="9.21" lengthAdjust="spacingAndGlyphs">0</text></svg>
<svg class="s" width="1" height="1"><text x="509.29" y="151.56" font-size="20" fill="#262626" textLength="9.21" lengthAdjust="spacingAndGlyphs">1</text></svg>
<svg class="s" width="1" height="1"><text x="846.29" y="151.56" font-size="20" fill="#262626" textLength="9.21" lengthAdjust="spacingAndGlyphs">0</text></svg>
<svg class="s" width="1" height="1"><text x="15.00" y="190.36" font-size="20" fill="#262626" textLength="9.21" lengthAdjust="spacingAndGlyphs">5</text></svg>
<svg class="s" width="1" height="1"><text x="123.15" y="190.36" font-size="20" fill="#262626" textLength="36.85" lengthAdjust="spacingAndGlyphs">1505</text></svg>
<svg class="s" width="1" height="1"><text x="184.80" y="190.36" font-size="20" fill="#262626" textLength="40.62" lengthAdjust="spacingAndGlyphs">Quart</text></svg>
<svg class="s" width="1" height="1"><text x="448.39" y="190.36" font-size="20" fill="#262626" textLength="9.21" lengthAdjust="spacingAndGlyphs">0</text></svg>
<svg class="s" width="1" height="1"><text x="509.29" y="190.36" font-size="20" fill="#262626" textLength="9.21" lengthAdjust="spacingAndGlyphs">1</text></svg>
<svg class="s" width="1" height="1"><text x="846.29" y="190.36" font-size="20" fill="#262626" textLength="9.21" lengthAdjust="spacingAndGlyphs">0</text></svg>
<svg class="s" width="1" height="1"><text x="34.39" y="229.16" font-size="20" fill="#262626" textLength="9.21" lengthAdjust="spacingAndGlyphs">6</text></svg>
<svg class="s" width="1" height="1"><text x="123.15" y="229.16" font-size="20" fill="#262626" textLength="36.85" lengthAdjust="spacingAndGlyphs">1503</text></svg>
<svg class="s" width="1" height="1"><text x="184.80" y="229.16" font-size="20" fill="#262626" textLength="130.00" lengthAdjust="spacingAndGlyphs">Type de demande</text></svg>
<svg class="s" width="1" height="1"><text x="448.39" y="229.16" font-size="20" fill="#262626" textLength="9.21" lengthAdjust="spacingAndGlyphs">0</text></svg>
<svg class="s" width="1" height="1"><text x="509.29" y="229.16" font-size="20" fill="#262626" textLength="9.21" lengthAdjust="spacingAndGlyphs">1</text></svg>
<svg class="s" width="1" height="1"><text x="846.29" y="229.16" font-size="20" fill="#262626" textLength="9.21" lengthAdjust="spacingAndGlyphs">0</text></svg>
<svg class="a" style="left:0px;top:-0.5px;" width="1201" height="242" viewBox="789 536 1201 242"><path d="M1468.2,641.3 L1477,651.8 L1494,630.3" fill="none" stroke="#2fb158" stroke-width="1.9"/><path d="M1897.7,641.3 L1906.5,651.8 L1923.5,630.3" fill="none" stroke="#2fb158" stroke-width="1.9"/><path d="M1468.2,681.0 L1477,691.5 L1494,670.0" fill="none" stroke="#2fb158" stroke-width="1.9"/><path d="M1897.7,681.0 L1906.5,691.5 L1923.5,670.0" fill="none" stroke="#2fb158" stroke-width="1.9"/><path d="M1468.2,758.5 L1477,769.0 L1494,747.5" fill="none" stroke="#2fb158" stroke-width="1.9"/><path d="M1897.7,758.5 L1906.5,769.0 L1923.5,747.5" fill="none" stroke="#2fb158" stroke-width="1.9"/><rect x="1347.75" y="711.25" width="46" height="18.5" rx="9.25" fill="#fdfdfd" stroke="#c4c4c4" stroke-width="1.5"/><circle cx="1358" cy="720.25" r="7" fill="#a8a8a8"/><rect x="1457" y="710.5" width="46.5" height="19.5" rx="9.75" fill="#2b579a"/><circle cx="1494.5" cy="720.25" r="7.2" fill="#fff"/><rect x="1887" y="710.5" width="46.5" height="19.5" rx="9.75" fill="#2b579a"/><circle cx="1924.5" cy="720.25" r="7.2" fill="#fff"/><path d="M839,714 H854.4 M839,720 H854.4 M839,726 H854.4" stroke="#555" stroke-width="2.2"/><circle cx="1176" cy="718" r="9" fill="none" stroke="#c6d6e6" stroke-width="1.4"/><line x1="1169.5" y1="724.5" x2="1161.5" y2="732.5" stroke="#c6d6e6" stroke-width="1.4"/><path d="M1816.5,709.5 H1842.5 V727 H1825 L1820,732.5 V727 H1816.5 Z" fill="none" stroke="#cfa3dd" stroke-width="1.4"/><path d="M1820.5,714 H1838.5 M1820.5,717.5 H1838.5 M1820.5,721 H1838.5" stroke="#cfa3dd" stroke-width="1.3"/></svg>
</div>
<div class="a" style="left:1990.00px;top:536.50px;width:26.5px;height:242px;background:#f0f0f0;"></div>
<svg class="a" style="left:1990px;top:536px;" width="27" height="270" viewBox="1990 536 27 270"><path d="M1997,553.5 L2003.5,545.5 L2010,553.5 Z" fill="#5a5a5a"/><rect x="1996.5" y="631" width="14" height="122" rx="7" fill="#c8c8c8"/><path d="M1997,764 L2003.5,772 L2010,764 Z" fill="#5a5a5a"/></svg>
<div class="a" style="left:789.00px;top:778.00px;width:1227.5px;height:28px;background:#f0f0f0;"></div>
<svg class="a" style="left:789px;top:778px;" width="1228" height="28" viewBox="789 778 1228 28"><path d="M806,786.5 L798,793 L806,799.5 Z" fill="#5a5a5a"/><rect x="815.5" y="787" width="638.5" height="12.5" rx="6.25" fill="#c8c8c8"/><path d="M1973.5,786.5 L1981.5,793 L1973.5,799.5 Z" fill="#5a5a5a"/></svg>
<div class="a" style="left:786.00px;top:818.00px;width:580.5px;height:539.5px;background:#fdfdfd;border:1.5px solid #d0d0d0;"></div>
<div class="a" style="left:787.50px;top:819.50px;width:577.5px;height:37.5px;background:#f0f0f0;"></div>
<svg class="s" width="1" height="1"><text x="792.00" y="847.96" font-size="19" fill="#2a2a2a" textLength="131.00" lengthAdjust="spacingAndGlyphs">Filtres du sujet</text></svg>
<div class="a" style="left:787.50px;top:857.00px;width:577.5px;height:46px;background:#f0f0f0;"></div>
<div class="a" style="left:995.00px;top:858.00px;width:286px;height:45px;background:#c9c9c9;"></div>
<div class="a" style="left:787.50px;top:856.50px;width:577.5px;height:2px;background:#c8c8c8;"></div>
<div class="a" style="left:866.00px;top:902.00px;width:499px;height:2px;background:#b4b4b4;"></div>
<div class="a" style="left:787.50px;top:902.00px;width:78.5px;height:2px;background:#d0d0d0;"></div>
<div class="a" style="left:865.10px;top:857.00px;width:1.8px;height:46px;background:#c4c4c4;"></div>
<div class="a" style="left:994.10px;top:857.00px;width:1.8px;height:46px;background:#c4c4c4;"></div>
<div class="a" style="left:1280.10px;top:857.00px;width:1.8px;height:46px;background:#c4c4c4;"></div>
<svg class="s" width="1" height="1"><text x="920.50" y="889.26" font-size="20" fill="#262626" textLength="39.59" lengthAdjust="spacingAndGlyphs">Code</text></svg>
<svg class="s" width="1" height="1"><text x="1010.30" y="889.26" font-size="20" fill="#262626" textLength="82.83" lengthAdjust="spacingAndGlyphs">Description</text></svg>
<div class="a" style="left:787.50px;top:903.00px;width:78.5px;height:40.5px;background:#c8c8c8;"></div>
<div class="a" style="left:866.00px;top:903.00px;width:39px;height:40.5px;background:#fafafa;"></div>
<div class="a" style="left:905.00px;top:903.00px;width:90px;height:40.5px;background:#e6e6e6;"></div>
<div class="a" style="left:995.00px;top:903.00px;width:286px;height:40.5px;background:#e6e6e6;"></div>
<div class="a" style="left:787.50px;top:943.50px;width:78.5px;height:39px;background:#f0f0f0;"></div>
<div class="a" style="left:866.00px;top:943.50px;width:39px;height:39px;background:#fafafa;"></div>
<div class="a" style="left:905.00px;top:943.50px;width:376px;height:39px;background:#f3f3f3;"></div>
<div class="a" style="left:787.50px;top:942.70px;width:493.5px;height:1.6px;background:#d6d6d6;"></div>
<div class="a" style="left:787.50px;top:981.70px;width:493.5px;height:1.6px;background:#d6d6d6;"></div>
<div class="a" style="left:865.20px;top:903.00px;width:1.6px;height:79.5px;background:#d6d6d6;"></div>
<div class="a" style="left:904.20px;top:903.00px;width:1.6px;height:79.5px;background:#d6d6d6;"></div>
<div class="a" style="left:994.20px;top:903.00px;width:1.6px;height:79.5px;background:#d6d6d6;"></div>
<div class="a" style="left:1280.20px;top:903.00px;width:1.6px;height:79.5px;background:#d6d6d6;"></div>
<div class="a" style="left:994.00px;top:903.00px;width:288px;height:41.5px;border:3px solid #2b5aa8;"></div>
<svg class="s" width="1" height="1"><text x="806.00" y="929.66" font-size="20" fill="#262626" textLength="9.21" lengthAdjust="spacingAndGlyphs">1</text></svg>
<svg class="s" width="1" height="1"><text x="823.39" y="968.96" font-size="20" fill="#262626" textLength="9.21" lengthAdjust="spacingAndGlyphs">2</text></svg>
<svg class="s" width="1" height="1"><text x="918.70" y="929.66" font-size="20" fill="#262626" textLength="30.99" lengthAdjust="spacingAndGlyphs">ATS</text></svg>
<svg class="s" width="1" height="1"><text x="918.70" y="968.96" font-size="20" fill="#262626" textLength="32.21" lengthAdjust="spacingAndGlyphs">TES</text></svg>
<svg class="s" width="1" height="1"><text x="1008.00" y="929.66" font-size="20" fill="#262626" textLength="86.55" lengthAdjust="spacingAndGlyphs">Fonction #2</text></svg>
<svg class="s" width="1" height="1"><text x="1008.00" y="968.96" font-size="20" fill="#262626" textLength="86.55" lengthAdjust="spacingAndGlyphs">Fonction #1</text></svg>
<svg class="a" style="left:786px;top:856px;" width="580" height="130" viewBox="786 856 580 130"><rect x="880.2" y="873.2" width="15.6" height="15.6" rx="3" fill="#fdfdfd" stroke="#9c9c9c" stroke-width="1.4"/><path d="M839,916.5 H854.5 M839,922.5 H854.5 M839,928.5 H854.5" stroke="#555" stroke-width="2.2"/><rect x="879.2" y="915.7" width="15.1" height="15.1" rx="3" fill="#fdfdfd" stroke="#9c9c9c" stroke-width="1.4"/><rect x="879.2" y="954.7" width="15.1" height="15.1" rx="3" fill="#fdfdfd" stroke="#9c9c9c" stroke-width="1.4"/></svg>
<div class="a" style="left:1411.00px;top:818.00px;width:606px;height:278px;background:#f7f7f7;border:1.5px solid #d0d0d0;"></div>
<div class="a" style="left:1412.50px;top:819.50px;width:603px;height:38px;background:#f0f0f0;"></div>
<svg class="s" width="1" height="1"><text x="1417.00" y="846.66" font-size="19" fill="#2a2a2a" textLength="262.00" lengthAdjust="spacingAndGlyphs">Propriétés/fonctions du sujet</text></svg>
<div class="a" style="left:1414.5px;top:857.5px;width:575.5px;height:209.5px;overflow:hidden;">
<div class="a" style="left:0.00px;top:0.00px;width:575.5px;height:45.5px;background:#f0f0f0;"></div>
<div class="a" style="left:0.00px;top:-0.50px;width:575.5px;height:2px;background:#c8c8c8;"></div>
<div class="a" style="left:76.50px;top:44.50px;width:500px;height:2px;background:#b4b4b4;"></div>
<div class="a" style="left:0.00px;top:44.50px;width:76.5px;height:2px;background:#d0d0d0;"></div>
<div class="a" style="left:75.60px;top:-0.50px;width:1.8px;height:46px;background:#c4c4c4;"></div>
<div class="a" style="left:510.60px;top:-0.50px;width:1.8px;height:46px;background:#c4c4c4;"></div>
<svg class="s" width="1" height="1"><text x="132.90" y="30.46" font-size="20" fill="#262626" textLength="127.64" lengthAdjust="spacingAndGlyphs">Type de propriété</text></svg>
<svg class="s" width="1" height="1"><text x="524.50" y="30.46" font-size="20" fill="#262626" textLength="39.59" lengthAdjust="spacingAndGlyphs">Code</text></svg>
<div class="a" style="left:0.00px;top:45.50px;width:76.5px;height:40.799999999999955px;background:#f0f0f0;"></div>
<div class="a" style="left:76.50px;top:45.50px;width:39px;height:40.799999999999955px;background:#f6f6f6;"></div>
<div class="a" style="left:115.50px;top:45.50px;width:460px;height:40.799999999999955px;background:#f3f3f3;"></div>
<div class="a" style="left:0.00px;top:86.30px;width:76.5px;height:38.5px;background:#f0f0f0;"></div>
<div class="a" style="left:76.50px;top:86.30px;width:39px;height:38.5px;background:#f6f6f6;"></div>
<div class="a" style="left:115.50px;top:86.30px;width:460px;height:38.5px;background:#fdfdfd;"></div>
<div class="a" style="left:0.00px;top:124.80px;width:76.5px;height:38.700000000000045px;background:#f0f0f0;"></div>
<div class="a" style="left:76.50px;top:124.80px;width:39px;height:38.700000000000045px;background:#f6f6f6;"></div>
<div class="a" style="left:115.50px;top:124.80px;width:460px;height:38.700000000000045px;background:#f3f3f3;"></div>
<div class="a" style="left:0.00px;top:163.50px;width:76.5px;height:39.59999999999991px;background:#f0f0f0;"></div>
<div class="a" style="left:76.50px;top:163.50px;width:39px;height:39.59999999999991px;background:#f6f6f6;"></div>
<div class="a" style="left:115.50px;top:163.50px;width:460px;height:39.59999999999991px;background:#fdfdfd;"></div>
<div class="a" style="left:0.00px;top:203.10px;width:76.5px;height:39.40000000000009px;background:#f0f0f0;"></div>
<div class="a" style="left:76.50px;top:203.10px;width:39px;height:39.40000000000009px;background:#f6f6f6;"></div>
<div class="a" style="left:115.50px;top:203.10px;width:460px;height:39.40000000000009px;background:#f3f3f3;"></div>
<div class="a" style="left:0.00px;top:85.50px;width:575.5px;height:1.6px;background:#d6d6d6;"></div>
<div class="a" style="left:0.00px;top:124.00px;width:575.5px;height:1.6px;background:#d6d6d6;"></div>
<div class="a" style="left:0.00px;top:162.70px;width:575.5px;height:1.6px;background:#d6d6d6;"></div>
<div class="a" style="left:0.00px;top:202.30px;width:575.5px;height:1.6px;background:#d6d6d6;"></div>
<div class="a" style="left:75.70px;top:45.50px;width:1.6px;height:170px;background:#d6d6d6;"></div>
<div class="a" style="left:114.70px;top:45.50px;width:1.6px;height:170px;background:#d6d6d6;"></div>
<div class="a" style="left:510.70px;top:45.50px;width:1.6px;height:170px;background:#d6d6d6;"></div>
<div class="a" style="left:0.00px;top:45.50px;width:1.5px;height:170px;background:#d0d0d0;"></div>
<svg class="s" width="1" height="1"><text x="29.29" y="72.86" font-size="20" fill="#262626" textLength="18.42" lengthAdjust="spacingAndGlyphs">14</text></svg>
<svg class="s" width="1" height="1"><text x="128.80" y="72.86" font-size="20" fill="#262626" textLength="295.97" lengthAdjust="spacingAndGlyphs">PRIMWEB - Création demande Insertion</text></svg>
<svg class="s" width="1" height="1"><text x="522.20" y="72.86" font-size="20" fill="#262626" textLength="32.19" lengthAdjust="spacingAndGlyphs">WCI</text></svg>
<svg class="s" width="1" height="1"><text x="29.29" y="111.66" font-size="20" fill="#262626" textLength="18.42" lengthAdjust="spacingAndGlyphs">15</text></svg>
<svg class="s" width="1" height="1"><text x="128.80" y="111.66" font-size="20" fill="#262626" textLength="313.30" lengthAdjust="spacingAndGlyphs">PRIMWEB - Création demande Mise à jour</text></svg>
<svg class="s" width="1" height="1"><text x="522.20" y="111.66" font-size="20" fill="#262626" textLength="39.54" lengthAdjust="spacingAndGlyphs">WCU</text></svg>
<svg class="s" width="1" height="1"><text x="29.29" y="150.66" font-size="20" fill="#262626" textLength="18.42" lengthAdjust="spacingAndGlyphs">16</text></svg>
<svg class="s" width="1" height="1"><text x="128.80" y="150.66" font-size="20" fill="#262626" textLength="324.29" lengthAdjust="spacingAndGlyphs">PRIMWEB - Création demande Suppression</text></svg>
<svg class="s" width="1" height="1"><text x="522.20" y="150.66" font-size="20" fill="#262626" textLength="39.54" lengthAdjust="spacingAndGlyphs">WCD</text></svg>
<svg class="s" width="1" height="1"><text x="29.29" y="190.16" font-size="20" fill="#262626" textLength="18.42" lengthAdjust="spacingAndGlyphs">17</text></svg>
<svg class="s" width="1" height="1"><text x="128.80" y="190.16" font-size="20" fill="#262626" textLength="324.89" lengthAdjust="spacingAndGlyphs">PRIMWEB - Création demande Visualisation</text></svg>
<svg class="s" width="1" height="1"><text x="522.20" y="190.16" font-size="20" fill="#262626" textLength="38.63" lengthAdjust="spacingAndGlyphs">WCV</text></svg>
<svg class="a" style="left:-0.5px;top:-0.5px;" width="577" height="210" viewBox="1414 857 577 210"><path d="M1905,885 L1911.5,877.5 L1918,885 Z" fill="#3a3a3a"/><rect x="1503.7" y="914.7" width="15.6" height="15.6" rx="3" fill="#fdfdfd" stroke="#9c9c9c" stroke-width="1.4"/><rect x="1503.7" y="955.5" width="15.6" height="15.6" rx="3" fill="#fdfdfd" stroke="#9c9c9c" stroke-width="1.4"/><rect x="1503.7" y="994.0" width="15.6" height="15.6" rx="3" fill="#fdfdfd" stroke="#9c9c9c" stroke-width="1.4"/><rect x="1503.7" y="1032.7" width="15.6" height="15.6" rx="3" fill="#fdfdfd" stroke="#9c9c9c" stroke-width="1.4"/></svg>
</div>
<div class="a" style="left:1990.00px;top:859.00px;width:26px;height:208px;background:#f0f0f0;"></div>
<div class="a" style="left:1412.50px;top:856.50px;width:603.5px;height:2px;background:#cacaca;"></div>
<div class="a" style="left:1412.50px;top:1067.00px;width:603px;height:27px;background:#f0f0f0;"></div>
<svg class="a" style="left:1410px;top:860px;" width="610" height="235" viewBox="1410 860 610 235"><path d="M1996,875.5 L2002,868 L2008,875.5 Z" fill="#5a5a5a"/><rect x="1995.5" y="977.5" width="13.5" height="28" rx="6.75" fill="#c8c8c8"/><path d="M1996,1051.5 L2002,1059 L2008,1051.5 Z" fill="#5a5a5a"/><path d="M1431.2,1074 L1423,1080.6 L1431.2,1087.2 Z" fill="#5a5a5a"/><rect x="1440.4" y="1074.5" width="480.6" height="12.7" rx="6.35" fill="#c8c8c8"/><path d="M1974.5,1074 L1982.5,1080.6 L1974.5,1087.2 Z" fill="#5a5a5a"/></svg>
<div class="a" style="left:1411.00px;top:1115.00px;width:606px;height:241.5px;background:#fdfdfd;border:1.5px solid #d0d0d0;"></div>
<div class="a" style="left:1412.50px;top:1116.50px;width:603px;height:37.5px;background:#f0f0f0;"></div>
<svg class="s" width="1" height="1"><text x="1417.00" y="1144.66" font-size="19" fill="#2a2a2a" textLength="228.60" lengthAdjust="spacingAndGlyphs">Configuration d&#x27;exclusion</text></svg>
<div class="a" style="left:1412.50px;top:1154.00px;width:603px;height:46px;background:#f0f0f0;"></div>
<div class="a" style="left:1412.50px;top:1153.50px;width:603px;height:2px;background:#c8c8c8;"></div>
<div class="a" style="left:1491.00px;top:1199.00px;width:524.5px;height:2px;background:#b4b4b4;"></div>
<div class="a" style="left:1414.50px;top:1199.00px;width:76.5px;height:2px;background:#d0d0d0;"></div>
<div class="a" style="left:1414.00px;top:1154.00px;width:1.5px;height:47px;background:#d0d0d0;"></div>
<div class="a" style="left:1490.10px;top:1154.00px;width:1.8px;height:46px;background:#c4c4c4;"></div>
<div class="a" style="left:1881.70px;top:1154.00px;width:1.8px;height:46px;background:#c4c4c4;"></div>
<svg class="s" width="1" height="1"><text x="1507.70" y="1184.66" font-size="20" fill="#262626" textLength="224.30" lengthAdjust="spacingAndGlyphs">Exclusion permise pour le sujet</text></svg>
<svg class="a" style="left:1860px;top:1170px;" width="20" height="16" viewBox="1860 1170 20 16"><path d="M1862.7,1182.7 L1869.1,1173.6 L1875.5,1182.7 Z" fill="#3a3a3a"/></svg>
<svg class="s" width="1" height="1"><text x="1548.00" y="1267.66" font-size="20" fill="#262626" textLength="408.60" lengthAdjust="spacingAndGlyphs">Aucun résultat ne correspond aux critères de recherche</text></svg>
<svg class="s" width="1" height="1"><text x="1721.00" y="1286.96" font-size="20" fill="#262626" textLength="63.50" lengthAdjust="spacingAndGlyphs">spécifiés</text></svg>
<div class="a" style="left:594.00px;top:1343.00px;width:157px;height:43px;background:#fdfdfd;border:1.5px solid #d4d4d4;border-radius:7px;"></div>
<svg class="a" style="left:600px;top:1345px;" width="50" height="40" viewBox="600 1345 50 40"><circle cx="621" cy="1364" r="15" fill="none" stroke="#5aa2da" stroke-width="1.8"/><path d="M617.5,1355.5 L626,1364 L617.5,1372.5" fill="none" stroke="#5aa2da" stroke-width="1.8"/></svg>
<svg class="s" width="1" height="1"><text x="647.60" y="1370.66" font-size="20" fill="#262626" textLength="74.00" lengthAdjust="spacingAndGlyphs">Réindexer</text></svg>
<svg class="a" style="left:0px;top:0px;pointer-events:none;" width="2064" height="1405" viewBox="0 0 2064 1405"><rect x="336.2" y="529" width="125.0" height="30.600000000000023" fill="none" stroke="#ff0000" stroke-width="6"/><rect x="968.3" y="621.7" width="228.70000000000005" height="46.69999999999993" fill="none" stroke="#ff0000" stroke-width="6"/><rect x="965.3" y="701.4" width="231.70000000000005" height="37.39999999999998" fill="none" stroke="#ff0000" stroke-width="6"/><rect x="1493.7" y="903.9" width="436.79999999999995" height="159.0000000000001" fill="none" stroke="#ff0000" stroke-width="6"/><path d="M68.45,575.85 H264.05 V594 L314,561 L264.05,620 V687.75 H68.45 Z" fill="#fff" stroke="#ff0000" stroke-width="4.3" stroke-linejoin="miter"/><path d="M979.2,420.2 H1753.2 V469.6 H1302.5 L1158,614 L1108.5,469.6 H979.2 Z" fill="#fff" stroke="#ff0000" stroke-width="4.3" stroke-linejoin="miter" stroke-miterlimit="10"/><circle cx="302.8" cy="549.2" r="31" fill="#f24848"/><circle cx="1176.7" cy="506.9" r="31" fill="#f24848"/><circle cx="1513.6" cy="877.2" r="31" fill="#f24848"/></svg>
<svg class="s" width="1" height="1"><text x="76.60" y="616.96" font-size="31" fill="#f00000" font-weight="bold" textLength="172.00" lengthAdjust="spacingAndGlyphs">Sélectionner</text></svg>
<svg class="s" width="1" height="1"><text x="76.60" y="663.06" font-size="31" fill="#f00000" font-weight="bold" textLength="98.40" lengthAdjust="spacingAndGlyphs">le sujet</text></svg>
<svg class="s" width="1" height="1"><text x="988.00" y="461.06" font-size="31" fill="#f00000" font-weight="bold" textLength="749.00" lengthAdjust="spacingAndGlyphs">Sélectionner la table concernée (Quart et/ou  Mission)</text></svg>
<svg class="s" width="1" height="1"><text x="293.62" y="561.66" font-size="33" fill="#ffffff" font-weight="bold">1</text></svg>
<svg class="s" width="1" height="1"><text x="1167.52" y="519.36" font-size="33" fill="#ffffff" font-weight="bold">2</text></svg>
<svg class="s" width="1" height="1"><text x="1504.42" y="889.66" font-size="33" fill="#ffffff" font-weight="bold">3</text></svg></body></html>
